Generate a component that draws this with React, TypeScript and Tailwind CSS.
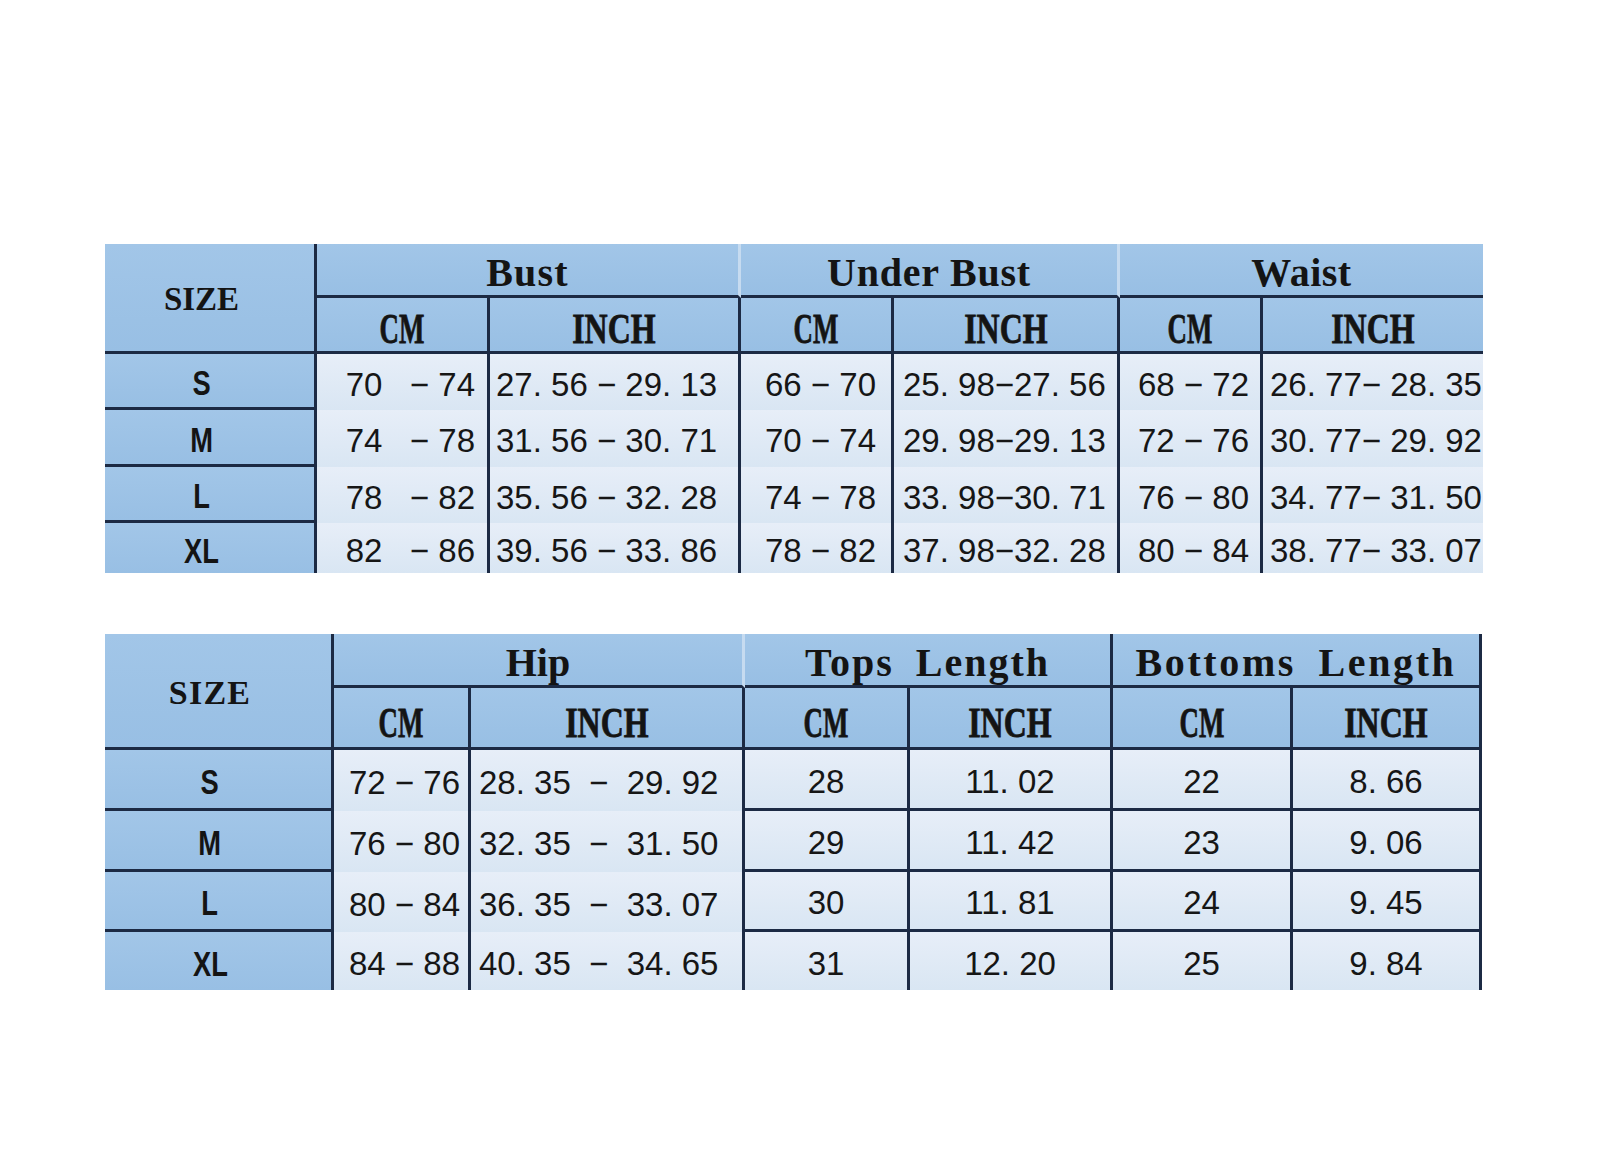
import type { ReactNode } from 'react';

// Size chart: two tables, blue headers, navy rules
const HEAD = 'bg-linear-to-b from-[#a2c6e8] to-[#98bfe4]';
const DATA = 'bg-linear-to-b from-[#e7eef8] to-[#d9e6f3]';
const SERIF = "font-['Liberation_Serif','Times_New_Roman',serif] font-bold text-[#141414]";
const SANS = "font-['Liberation_Sans',Arial,sans-serif] text-[33px] leading-none text-[#161616] whitespace-pre";

function Label({ children, className }: { children: ReactNode; className: string }) {
  return <span className={`inline-block leading-none whitespace-pre ${SERIF} ${className}`}>{children}</span>;
}

function SizeCell({ s, last = false }: { s: string; last?: boolean }) {
  return (
    <div
      className={`${HEAD} flex items-center justify-center pr-4 pt-1 border-r-[3px] border-r-[#1c2a44] ${
        last ? '' : 'border-b-[3px] border-b-[#1c2a44]'
      }`}
    >
      <span className="inline-block font-['Liberation_Sans',Arial,sans-serif] font-bold text-[35px] leading-none text-[#141414] scale-x-[0.78]">
        {s}
      </span>
    </div>
  );
}

function Unit({ t }: { t: string }) {
  return t === 'CM' ? (
    <Label className="text-[42px] scale-x-[0.64] [-webkit-text-stroke:0.8px_#141414]">CM</Label>
  ) : (
    <Label className="text-[42px] scale-x-[0.76] [-webkit-text-stroke:0.8px_#141414]">INCH</Label>
  );
}

const rows1 = [
  ['S', '70   − 74', '27. 56 − 29. 13', '66 − 70', '25. 98−27. 56', '68 − 72', '26. 77− 28. 35'],
  ['M', '74   − 78', '31. 56 − 30. 71', '70 − 74', '29. 98−29. 13', '72 − 76', '30. 77− 29. 92'],
  ['L', '78   − 82', '35. 56 − 32. 28', '74 − 78', '33. 98−30. 71', '76 − 80', '34. 77− 31. 50'],
  ['XL', '82   − 86', '39. 56 − 33. 86', '78 − 82', '37. 98−32. 28', '80 − 84', '38. 77− 33. 07'],
];

const rows2 = [
  ['S', '72 − 76', '28. 35  −  29. 92', '28', '11. 02', '22', '8. 66'],
  ['M', '76 − 80', '32. 35  −  31. 50', '29', '11. 42', '23', '9. 06'],
  ['L', '80 − 84', '36. 35  −  33. 07', '30', '11. 81', '24', '9. 45'],
  ['XL', '84 − 88', '40. 35  −  34. 65', '31', '12. 20', '25', '9. 84'],
];

// per-column text placement for table 1
const align1 = [
  'justify-end pr-[12px]',
  'justify-start pl-[6px]',
  'justify-end pr-[15px]',
  'justify-start pl-[9px]',
  'justify-end pr-[11px]',
  'justify-start pl-[7px]',
];

function TableOne() {
  return (
    <div className="grid w-[1378px] grid-cols-[212px_173px_251px_153px_226px_143px_220px] grid-rows-[54px_56px_56px_57px_56px_50px]">
      <div className={`${HEAD} row-span-2 flex items-center justify-center pr-4 pt-1 border-r-[3px] border-b-[3px] border-[#1c2a44]`}>
        <Label className="text-[33px]">SIZE</Label>
      </div>
      <div className={`${HEAD} col-span-2 flex items-center justify-center pt-[7px] border-r-[3px] border-r-[#c6dbf0] border-b-[3px] border-b-[#1c2a44]`}>
        <Label className="text-[40px] tracking-[1.2px]">Bust</Label>
      </div>
      <div className={`${HEAD} col-span-2 flex items-center justify-center pt-[7px] border-r-[3px] border-r-[#c6dbf0] border-b-[3px] border-b-[#1c2a44]`}>
        <Label className="text-[40px] tracking-[0.8px]">Under Bust</Label>
      </div>
      <div className={`${HEAD} col-span-2 flex items-center justify-center pt-[7px] border-b-[3px] border-b-[#1c2a44]`}>
        <Label className="text-[40px] tracking-[0.5px]">Waist</Label>
      </div>

      {['CM', 'INCH', 'CM', 'INCH', 'CM', 'INCH'].map((t, i) => (
        <div
          key={i}
          className={`${HEAD} flex items-center justify-center pt-[8px] border-b-[3px] border-b-[#1c2a44] ${
            i < 5 ? 'border-r-[3px] border-r-[#1c2a44]' : ''
          }`}
        >
          <Unit t={t} />
        </div>
      ))}

      {rows1.map((r, ri) => (
        <Row1 key={r[0]} r={r} last={ri === rows1.length - 1} />
      ))}
    </div>
  );
}

function Row1({ r, last }: { r: string[]; last: boolean }) {
  return (
    <>
      <SizeCell s={r[0]} last={last} />
      {r.slice(1).map((v, i) => (
        <div
          key={i}
          className={`${DATA} flex items-center pt-1 ${align1[i]} ${i < 5 ? 'border-r-[3px] border-r-[#1c2a44]' : ''}`}
        >
          <span className={SANS}>{v}</span>
        </div>
      ))}
    </>
  );
}

function TableTwo() {
  return (
    <div className="grid w-[1377px] grid-cols-[229px_137px_274px_165px_203px_180px_189px] grid-rows-[54px_62px_61px_61px_60px_58px]">
      <div className={`${HEAD} row-span-2 flex items-center justify-center pr-4 pt-1 border-r-[3px] border-b-[3px] border-[#1c2a44]`}>
        <Label className="text-[34px] tracking-[1.2px]">SIZE</Label>
      </div>
      <div className={`${HEAD} col-span-2 flex items-center justify-center pt-[6px] border-r-[3px] border-r-[#c6dbf0] border-b-[3px] border-b-[#1c2a44]`}>
        <Label className="text-[40px]">Hip</Label>
      </div>
      <div className={`${HEAD} col-span-2 flex items-center justify-center pt-[6px] border-r-[3px] border-b-[3px] border-[#1c2a44]`}>
        <Label className="text-[40px] tracking-[2px] [word-spacing:10px]">Tops Length</Label>
      </div>
      <div className={`${HEAD} col-span-2 flex items-center justify-center pt-[6px] border-r-[3px] border-b-[3px] border-[#1c2a44]`}>
        <Label className="text-[40px] tracking-[2.6px] [word-spacing:10px]">Bottoms Length</Label>
      </div>

      {['CM', 'INCH', 'CM', 'INCH', 'CM', 'INCH'].map((t, i) => (
        <div
          key={i}
          className={`${HEAD} flex items-center justify-center pt-[10px] border-r-[3px] border-b-[3px] border-[#1c2a44]`}
        >
          <Unit t={t} />
        </div>
      ))}

      {rows2.map((r, ri) => (
        <Row2 key={r[0]} r={r} last={ri === rows2.length - 1} />
      ))}
    </div>
  );
}

function Row2({ r, last }: { r: string[]; last: boolean }) {
  const rule = last ? '' : 'border-b-[3px] border-b-[#1c2a44]';
  return (
    <>
      <SizeCell s={r[0]} last={last} />
      <div className={`${DATA} flex items-center justify-end pr-[8px] pt-1 border-r-[3px] border-r-[#1c2a44]`}>
        <span className={SANS}>{r[1]}</span>
      </div>
      <div className={`${DATA} flex items-center justify-start pl-[8px] pt-1 border-r-[3px] border-r-[#1c2a44]`}>
        <span className={SANS}>{r[2]}</span>
      </div>
      {r.slice(3).map((v, i) => (
        <div key={i} className={`${DATA} flex items-center justify-center pt-1 border-r-[3px] border-r-[#1c2a44] ${rule}`}>
          <span className={SANS}>{v}</span>
        </div>
      ))}
    </>
  );
}

export default function App() {
  return (
    <div className="w-[1600px] h-[1171px] bg-white pl-[105px] pt-[244px] flex flex-col gap-[61px]">
      <TableOne />
      <TableTwo />
    </div>
  );
}
